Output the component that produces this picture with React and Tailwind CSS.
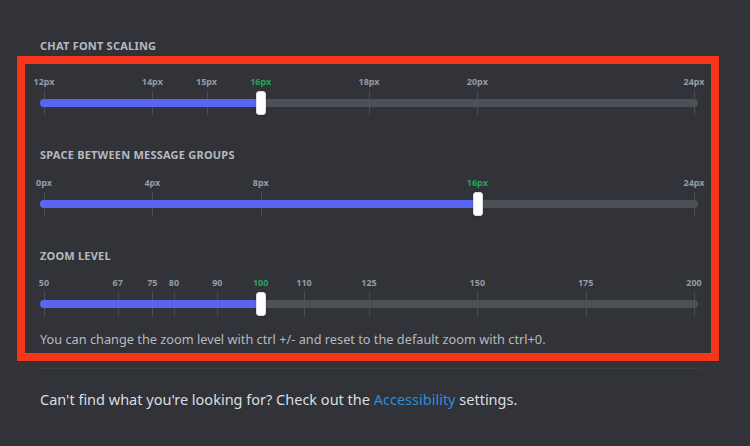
import React from "react";

const fontScale = { marks: [12, 14, 15, 16, 18, 20, 24], min: 12, max: 24, value: 16, unit: "px" };
const groupSpace = { marks: [0, 4, 8, 16, 24], min: 0, max: 24, value: 16, unit: "px" };
const zoomLevel = { marks: [50, 67, 75, 80, 90, 100, 110, 125, 150, 175, 200], min: 50, max: 200, value: 100, unit: "" };

// marker positions on the scale: 4px .. 654px of a 660px slider
const toX = (v, min, max) => 4 + ((v - min) / (max - min)) * 650;

function Slider({ marks, min, max, value, unit }) {
  const handleX = toX(value, min, max);
  return (
    <div className="flex w-[660px] flex-col gap-[3px]">
      {/* MARKER LABELS */}
      <div className="relative h-3">
        {marks.map((m) => (
          <span
            key={m}
            className={`absolute top-0 -translate-x-1/2 whitespace-nowrap text-[9px] leading-3 font-bold ${m === value ? "text-[#23a55a]" : "text-[#949ba4]"}`}
            style={{ left: toX(m, min, max) }}
          >
            {m}{unit}
          </span>
        ))}
      </div>

      {/* TRACK */}
      <div className="relative flex h-6 items-center">
        {marks.map((m) => (
          <div key={m} className="absolute top-0 h-6 w-px bg-[#4e5058]" style={{ left: toX(m, min, max) }} />
        ))}
        <div className="relative flex h-2 w-[658px] overflow-hidden rounded-full bg-[#4e5058]">
          <div className="h-2 bg-[#5865f2]" style={{ width: handleX }} />
        </div>
        <div
          className="absolute top-0 h-6 w-[10px] -translate-x-1/2 rounded-[3px] border border-[#dcdde1] bg-white shadow"
          style={{ left: handleX + 0.5 }}
        />
      </div>
    </div>
  );
}

function Section({ title, children }) {
  return (
    <section className="flex flex-col gap-[14px]">
      <h2 className="h-4 text-[11px] leading-4 font-bold uppercase tracking-[0.02em] text-[#b5bac1]">{title}</h2>
      {children}
    </section>
  );
}

export default function App() {
  return (
    <div className="h-[446px] w-[750px] overflow-hidden bg-[#313338] pt-[38px] pl-[40px]" style={{ fontFamily: '"Noto Sans", sans-serif' }}>
      <div className="flex w-[660px] flex-col">
        <h2 className="h-4 text-[11px] leading-4 font-bold uppercase tracking-[0.02em] text-[#b5bac1]">Chat Font Scaling</h2>

        {/* ANNOTATION BOX */}
        <div className="-ml-[23px] mt-[2px] flex w-[702px] flex-col gap-[32px] border-8 border-[#f5361a] pl-[15px] pt-[12px] pb-[4px]">
          <Slider {...fontScale} />

          <Section title="Space Between Message Groups">
            <Slider {...groupSpace} />
          </Section>

          <section className="flex flex-col gap-[13px]">
            <h2 className="h-4 text-[11px] leading-4 font-bold uppercase tracking-[0.02em] text-[#b5bac1]">Zoom Level</h2>
            <Slider {...zoomLevel} />
            <p className="h-5 text-[12.75px] leading-5 text-[#b5bac1]">
              You can change the zoom level with ctrl +/- and reset to the default zoom with ctrl+0.
            </p>
          </section>
        </div>

        <div className="mt-[7px] h-px w-[660px] bg-[#3b3d44]" />

        <p className="mt-[20px] h-5 text-[14.5px] leading-5 text-[#dbdee1]">
          Can't find what you're looking for? Check out the <span className="text-[#2b8ed8]">Accessibility</span> settings.
        </p>
      </div>
    </div>
  );
}
